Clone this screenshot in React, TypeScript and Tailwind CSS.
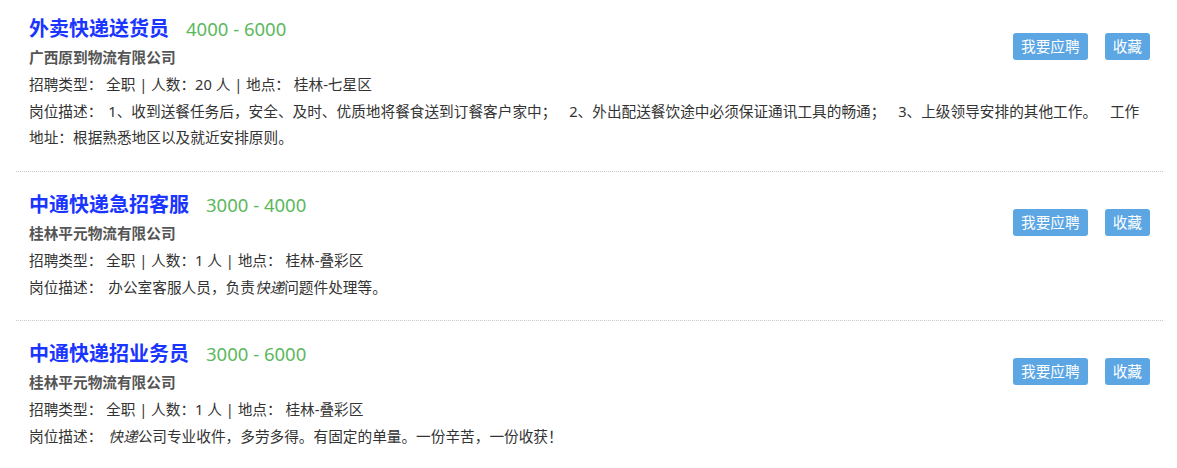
import React from "react";

type Job = {
  title: string;
  salary: string;
  company: string;
  count: string;
  place: string;
  desc: React.ReactNode;
  first?: boolean;
  last?: boolean;
};

const jobs: Job[] = [
  {
    title: "外卖快递送货员",
    salary: "4000 - 6000",
    company: "广西原到物流有限公司",
    count: "20",
    place: "桂林-七星区",
    desc: (
      <span className="[word-spacing:9px]">
        1、收到送餐任务后，安全、及时、优质地将餐食送到订餐客户家中； 2、外出配送餐饮途中必须保证通讯工具的畅通； 3、上级领导安排的其他工作。 工作
        <br />
        地址：根据熟悉地区以及就近安排原则。
      </span>
    ),
    first: true,
  },
  {
    title: "中通快递急招客服",
    salary: "3000 - 4000",
    company: "桂林平元物流有限公司",
    count: "1",
    place: "桂林-叠彩区",
    desc: (
      <>
        办公室客服人员，负责<em className="italic">快递</em>问题件处理等。
      </>
    ),
  },
  {
    title: "中通快递招业务员",
    salary: "3000 - 6000",
    company: "桂林平元物流有限公司",
    count: "1",
    place: "桂林-叠彩区",
    desc: (
      <>
        <em className="italic">快递</em>公司专业收件，多劳多得。有固定的单量。一份辛苦，一份收获！
      </>
    ),
    last: true,
  },
];

function JobItem({ job }: { job: Job }) {
  return (
    <div
      className={
        "flow-root px-[13px] " +
        (job.first ? "pt-[14px] pb-[21px] " : "pt-[18px] pb-[20px] ") +
        (job.last ? "" : "border-b border-dotted border-[#c8c8c8]")
      }
    >
      <div className="float-right mt-[19px] flex gap-[17px]">
        <button className="h-[27px] rounded-[3px] bg-[#5ca6e4] px-[8px] text-[14.67px] leading-[27px] text-white">
          我要应聘
        </button>
        <button className="h-[27px] rounded-[3px] bg-[#5ca6e4] px-[8px] text-[14.67px] leading-[27px] text-white">
          收藏
        </button>
      </div>
      <div className="flex h-[30px] items-baseline">
        <span className="text-[20px] font-bold leading-[30px] text-[#1a35ff]">{job.title}</span>
        <span className="ml-[17px] text-[18.5px] leading-[30px] text-[#5cb85c]">{job.salary}</span>
      </div>
      <div className="text-[14.67px] font-bold leading-[26px] text-[#555555]">{job.company}</div>
      <div className="mt-px text-[14.67px] leading-[26px] text-[#333333]">
        招聘类型：&nbsp;全职 | 人数：{job.count} 人 | 地点：&nbsp;{job.place}
      </div>
      <div className="mt-px text-[14.67px] leading-[26px] text-[#333333]">
        岗位描述：<span className="inline-block w-[6px]" />{job.desc}
      </div>
    </div>
  );
}

export default function App() {
  return (
    <div
      className="min-h-[468px] bg-white"
      style={{ fontFamily: '"Noto Sans", "Noto Sans CJK SC", sans-serif' }}
    >
      <div className="ml-[16px] w-[1147px]">
        {jobs.map((j, i) => (
          <JobItem key={i} job={j} />
        ))}
      </div>
    </div>
  );
}
